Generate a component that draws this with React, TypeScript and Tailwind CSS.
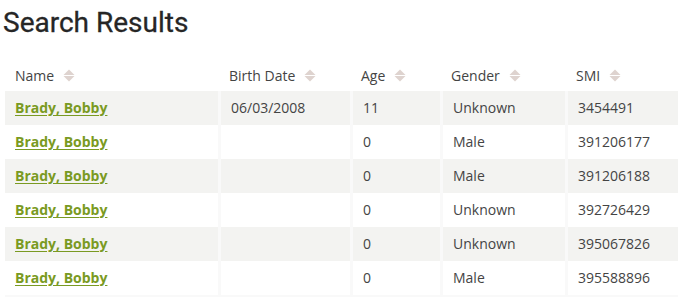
import React from "react";

const rows = [
  { bd: "06/03/2008", age: "11", gender: "Unknown", smi: "3454491" },
  { bd: "", age: "0", gender: "Male", smi: "391206177" },
  { bd: "", age: "0", gender: "Male", smi: "391206188" },
  { bd: "", age: "0", gender: "Unknown", smi: "392726429" },
  { bd: "", age: "0", gender: "Unknown", smi: "395067826" },
  { bd: "", age: "0", gender: "Male", smi: "395588896" },
];

function SortIcon() {
  return (
    <svg width="12" height="13" viewBox="0 0 12 13" className="ml-[9px] shrink-0">
      <path d="M6 0.5 L11.5 6 L0.5 6 Z" fill="#ded3cf" />
      <path d="M0.5 7 L11.5 7 L6 12.5 Z" fill="#ded3cf" />
    </svg>
  );
}

const headers = ["Name", "Birth Date", "Age", "Gender", "SMI"];

export default function App() {
  return (
    <div className="w-[678px] h-[297px] overflow-hidden bg-white" style={{ fontFamily: "'Open Sans', sans-serif" }}>
      <h1
        className="pl-[3px] pt-[7px] text-[28px] leading-[32px] text-[#262626] [-webkit-text-stroke:0.3px_#262626]"
        style={{ fontFamily: "Roboto, sans-serif" }}
      >
        Search Results
      </h1>
      <div className="ml-[5px] mt-[21px] grid grid-cols-[213px_129px_87px_122px_1fr] gap-x-[3px] text-[14px] text-[#444444]">
        {headers.map((h, i) => (
          <div key={h} className={`flex h-[31px] items-center ${i === 0 ? "pl-[10px]" : "pl-[8px]"}`}>
            <span>{h}</span>
            <SortIcon />
          </div>
        ))}
      </div>
      <div className="ml-[5px] grid grid-cols-[213px_129px_87px_122px_1fr] gap-x-[3px] bg-[#f9f9f9] pb-[2px] text-[14px] text-[#444444]">
        {rows.map((r, i) => {
          const bg = i % 2 === 0 ? "bg-[#f3f3f1]" : "bg-white";
          return (
            <React.Fragment key={i}>
              <div className={`${bg} flex h-[34px] items-center pl-[10px] pb-[1px]`}>
                <a href="#" className="font-bold text-[#7a9a22] underline underline-offset-2">
                  Brady, Bobby
                </a>
              </div>
              <div className={`${bg} flex h-[34px] items-center pl-[10px] pb-[1px]`}>{r.bd}</div>
              <div className={`${bg} flex h-[34px] items-center pl-[10px] pb-[1px]`}>{r.age}</div>
              <div className={`${bg} flex h-[34px] items-center pl-[10px] pb-[1px]`}>{r.gender}</div>
              <div className={`${bg} flex h-[34px] items-center pl-[10px] pb-[1px]`}>{r.smi}</div>
            </React.Fragment>
          );
        })}
      </div>
    </div>
  );
}
